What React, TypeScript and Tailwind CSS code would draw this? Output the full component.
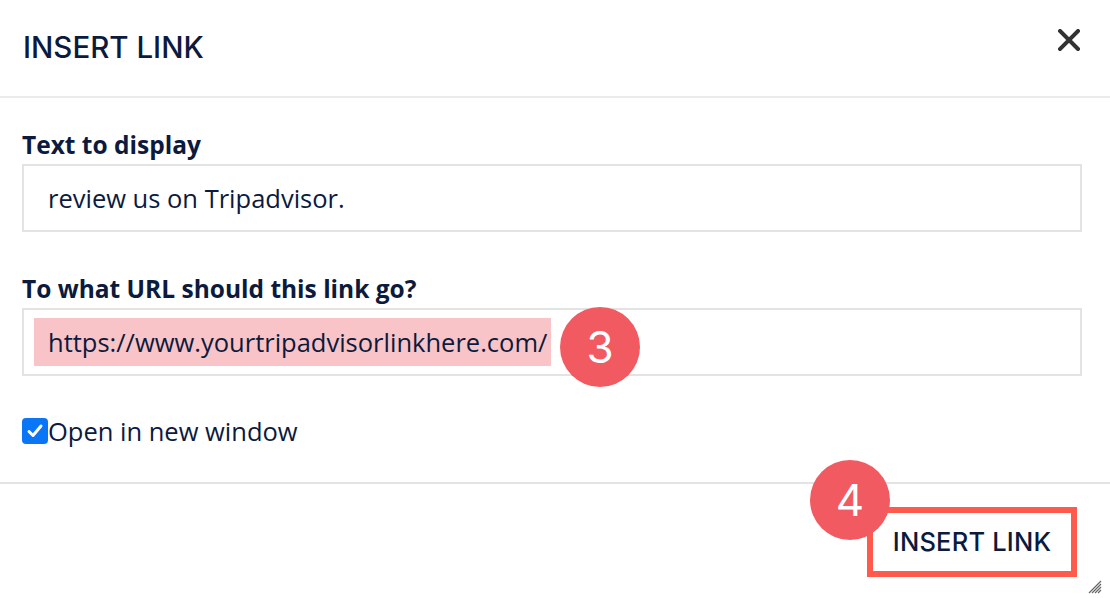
import { useState } from "react";

// Badge numérico de los pasos
function StepBadge({ n, className }: { n: string; className: string }) {
  return (
    <div
      className={
        "absolute w-[80px] h-[80px] rounded-full bg-[#f25a61] text-white flex items-center justify-center text-[44px] leading-none font-['Inter',sans-serif] " +
        className
      }
    >
      {n}
    </div>
  );
}

export default function App() {
  const [checked, setChecked] = useState(true);

  return (
    <div className="relative w-[1110px] h-[598px] bg-white overflow-hidden text-[#0b1a3d] font-['Open_Sans',sans-serif]">
      {/* Cabecera */}
      <header className="h-[98px] flex items-center justify-between pl-[23px] pr-[29px] border-b-2 border-[#ebebeb]">
        <h1 className="text-[29.5px] font-medium font-['Inter',sans-serif] pb-[2px]">INSERT LINK</h1>
        <button className="w-[24px] h-[24px] flex items-center justify-center mb-[16px]">
          <svg width="22" height="22" viewBox="0 0 22 22">
            <path d="M2 2 L20 20 M20 2 L2 20" stroke="#333" strokeWidth="4" strokeLinecap="square" />
          </svg>
        </button>
      </header>

      {/* Contenido */}
      <div className="pl-[22px] pr-[28px] pt-[32px]">
        <label className="block text-[24.5px] font-bold leading-[30px] mb-[4px]">Text to display</label>
        <div className="h-[68px] border-2 border-[#e3e3e3] flex items-center pl-[24px] text-[25.5px]">
          review us on Tripadvisor.
        </div>

        <label className="block text-[24.5px] font-bold leading-[30px] mt-[42px] mb-[4px]">
          To what URL should this link go?
        </label>
        <div className="relative h-[68px] border-2 border-[#e3e3e3] flex items-center pl-[10px] text-[25.5px]">
          <span className="h-[48px] flex items-center pl-[14px] pr-[4px] bg-[#f9c4c7]">
            https://www.yourtripadvisorlinkhere.com/
          </span>
          <StepBadge n="3" className="left-[536px] top-[-3px]" />
        </div>

        <label className="flex items-center mt-[40px] text-[25.5px] cursor-pointer" onClick={() => setChecked(!checked)}>
          <span className="w-[26px] h-[26px] rounded-[4px] bg-[#0b76f5] flex items-center justify-center">
            {checked && (
              <svg width="18" height="18" viewBox="0 0 18 18">
                <path d="M3 9.5 L7 13.5 L15 4" stroke="white" strokeWidth="3" fill="none" strokeLinecap="round" strokeLinejoin="round" />
              </svg>
            )}
          </span>
          <span className="leading-[30px]">Open in new window</span>
        </label>
      </div>

      {/* Pie */}
      <footer className="mt-[36px] border-t-2 border-[#e3e3e3] flex justify-end pr-[33px] pt-[23px]">
        <div className="relative">
          <button className="w-[210px] h-[70px] flex items-center justify-center border-[6px] border-[#ff5a4b] text-[25.5px] font-medium font-['Inter',sans-serif] tracking-[0.2px]">
            INSERT LINK
          </button>
          <StepBadge n="4" className="left-[-57px] top-[-47px]" />
        </div>
      </footer>

      {/* Asa de redimensionar */}
      <svg className="absolute right-[8px] bottom-[4px]" width="14" height="14" viewBox="0 0 14 14">
        <path d="M13 1 L1 13 M13 4 L4 13 M13 7 L7 13 M13 10 L10 13" stroke="#666" strokeWidth="1.2" />
      </svg>
    </div>
  );
}
